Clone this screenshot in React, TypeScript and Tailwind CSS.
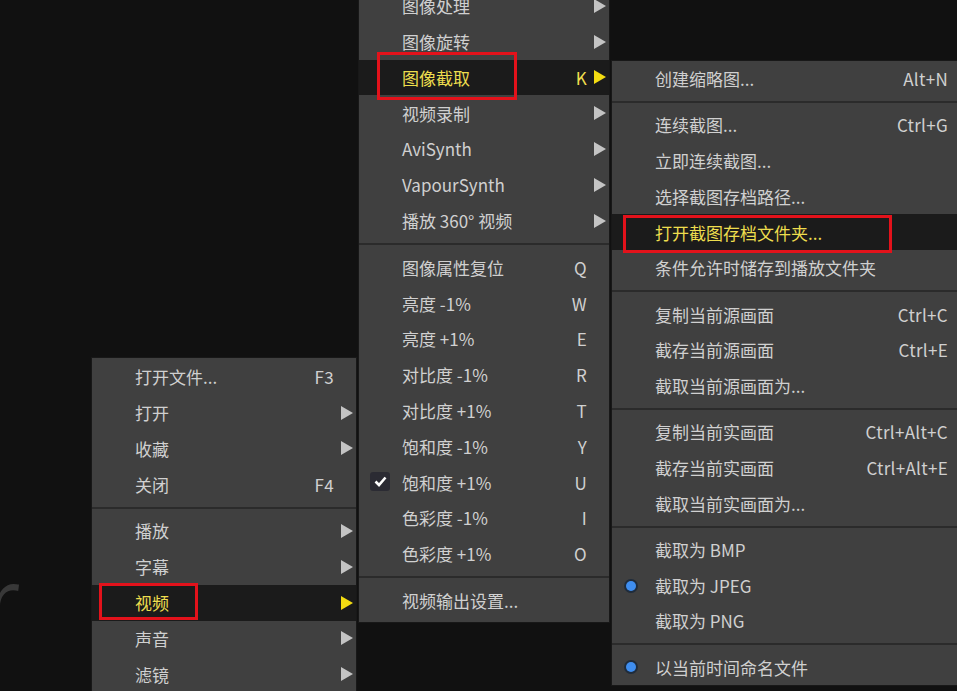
import React from "react";

type Item =
  | "sep"
  | {
      label: string;
      key?: string;
      arrow?: boolean;
      active?: boolean;
      check?: boolean;
      radio?: boolean;
    };

const leftMenu: Item[] = [
  { label: "打开文件...", key: "F3" },
  { label: "打开", arrow: true },
  { label: "收藏", arrow: true },
  { label: "关闭", key: "F4" },
  "sep",
  { label: "播放", arrow: true },
  { label: "字幕", arrow: true },
  { label: "视频", arrow: true, active: true },
  { label: "声音", arrow: true },
  { label: "滤镜", arrow: true },
];

const videoMenu: Item[] = [
  { label: "图像处理", arrow: true },
  { label: "图像旋转", arrow: true },
  { label: "图像截取", key: "K", arrow: true, active: true },
  { label: "视频录制", arrow: true },
  { label: "AviSynth", arrow: true },
  { label: "VapourSynth", arrow: true },
  { label: "播放 360° 视频", arrow: true },
  "sep",
  { label: "图像属性复位", key: "Q" },
  { label: "亮度 -1%", key: "W" },
  { label: "亮度 +1%", key: "E" },
  { label: "对比度 -1%", key: "R" },
  { label: "对比度 +1%", key: "T" },
  { label: "饱和度 -1%", key: "Y" },
  { label: "饱和度 +1%", key: "U", check: true },
  { label: "色彩度 -1%", key: "I" },
  { label: "色彩度 +1%", key: "O" },
  "sep",
  { label: "视频输出设置..." },
];

const captureMenu: Item[] = [
  { label: "创建缩略图...", key: "Alt+N" },
  "sep",
  { label: "连续截图...", key: "Ctrl+G" },
  { label: "立即连续截图..." },
  { label: "选择截图存档路径..." },
  { label: "打开截图存档文件夹...", active: true },
  { label: "条件允许时储存到播放文件夹" },
  "sep",
  { label: "复制当前源画面", key: "Ctrl+C" },
  { label: "截存当前源画面", key: "Ctrl+E" },
  { label: "截取当前源画面为..." },
  "sep",
  { label: "复制当前实画面", key: "Ctrl+Alt+C" },
  { label: "截存当前实画面", key: "Ctrl+Alt+E" },
  { label: "截取当前实画面为..." },
  "sep",
  { label: "截取为 BMP" },
  { label: "截取为 JPEG", radio: true },
  { label: "截取为 PNG" },
  "sep",
  { label: "以当前时间命名文件", radio: true },
];

function Arrow({ active }: { active?: boolean }) {
  return (
    <svg width="13" height="14" viewBox="0 0 13 14">
      <polygon points="1,0 13,7 1,14" fill={active ? "#f3dc12" : "#c4c4c4"} />
    </svg>
  );
}

function Menu({ items, className, sepClass }: { items: Item[]; className: string; sepClass: string }) {
  return (
    <div className={`absolute bg-[#404040] border border-[#181818] ${className}`}>
      {items.map((it, i) =>
        it === "sep" ? (
          <div key={i} className={`${sepClass} flex items-center`}>
            <div className="h-[2px] w-full bg-[#2b2b2b]" />
          </div>
        ) : (
          <div
            key={i}
            className={`relative h-[35.8px] flex items-center pl-[43px] ${
              it.active ? "bg-[#1b1b1b] text-[#eede4e]" : "text-[#d0d0d0]"
            }`}
          >
            {it.check && (
              <div className="absolute left-[11px] top-[8px] w-[20px] h-[19px] rounded-[3px] bg-[#2b2b33] flex items-center justify-center">
                <svg width="13" height="11" viewBox="0 0 13 11">
                  <path d="M1.5 5.5 L5 9 L11.5 1.5" stroke="#ffffff" strokeWidth="2.6" fill="none" />
                </svg>
              </div>
            )}
            {it.radio && (
              <div className="absolute left-[12px] top-[11px] w-[14px] h-[14px] rounded-full bg-[#1f2c3c] flex items-center justify-center">
                <div className="w-[10px] h-[10px] rounded-full bg-[#3f8ef0]" />
              </div>
            )}
            <span className="flex-1 whitespace-nowrap">{it.label}</span>
            {it.key && <span className="whitespace-nowrap tracking-[0.3px]">{it.key}</span>}
            <div className="w-[22px] flex justify-end pr-[3px]">
              {it.arrow && <Arrow active={it.active} />}
            </div>
          </div>
        )
      )}
    </div>
  );
}

export default function App() {
  return (
    <div
      className="relative w-[957px] h-[691px] overflow-hidden bg-[#111111] text-[17px]"
      style={{ fontFamily: '"Noto Sans CJK SC", "Noto Sans", sans-serif' }}
    >
      <div
        className="absolute left-[-14px] top-[556px] text-[84px] leading-none font-normal text-[#383838]"
        style={{ fontFamily: '"Open Sans", sans-serif' }}
      >
        r
      </div>

      <Menu items={leftMenu} sepClass="h-[11px]" className="left-[91px] top-[357px] w-[266px] pt-[1px]" />
      <Menu items={videoMenu} sepClass="h-[11px]" className="left-[358px] top-[-13px] w-[252px] pb-[3px]" />
      <Menu items={captureMenu} sepClass="h-[10.3px]" className="left-[611px] top-[60px] w-[360px]" />

      <div className="absolute left-[377px] top-[52px] w-[140px] h-[48px] border-[3px] border-[#e3121b]" />
      <div className="absolute left-[99px] top-[583px] w-[99px] h-[37px] border-[3px] border-[#e3121b]" />
      <div className="absolute left-[623px] top-[215px] w-[269px] h-[38px] border-[3px] border-[#e3121b]" />
    </div>
  );
}
